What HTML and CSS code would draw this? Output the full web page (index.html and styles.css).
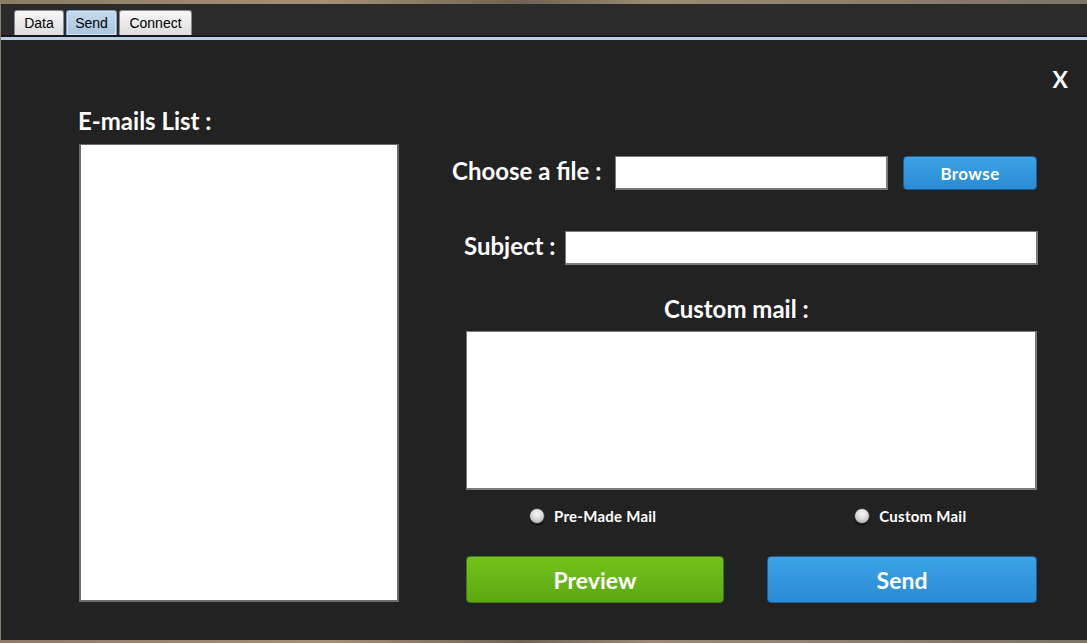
FILE: index.html
```html
<!DOCTYPE html>
<html>
<head>
<meta charset="utf-8">
<link rel="stylesheet" href="styles.css">
</head>
<body>
<div class="app">
  <div class="tabbar">
    <div class="tab">Data</div>
    <div class="tab active">Send</div>
    <div class="tab">Connect</div>
  </div>
  <div class="rule"></div>
  <div class="content">
    <div class="closerow"><span class="close">X</span></div>
    <div class="main">
      <div class="left">
        <div class="heading">E-mails List :</div>
        <div class="listbox"></div>
      </div>
      <div class="right">
        <div class="row file-row">
          <div class="label">Choose a file :</div>
          <div class="field file-field"></div>
          <div class="btn browse">Browse</div>
        </div>
        <div class="row subject-row">
          <div class="label">Subject :</div>
          <div class="field subject-field"></div>
        </div>
        <div class="label custom-label">Custom mail :</div>
        <div class="textarea"></div>
        <div class="radios">
          <div class="radio"><span class="dot"></span><span>Pre-Made Mail</span></div>
          <div class="radio second"><span class="dot"></span><span>Custom Mail</span></div>
        </div>
        <div class="buttons">
          <div class="btn big preview">Preview</div>
          <div class="btn big send">Send</div>
        </div>
      </div>
    </div>
  </div>
</div>
</body>
</html>
```
FILE: styles.css
```css
html, body {
  margin: 0;
  padding: 0;
}
body {
  width: 1087px;
  height: 643px;
  overflow: hidden;
  background: linear-gradient(90deg, #8b7b68 0%, #a39078 30%, #6f6454 48%, #9a8a76 60%, #7d7466 100%);
  font-family: "Liberation Sans", Arial, sans-serif;
}
.app {
  margin: 4px 0 0 1px;
  width: 1086px;
  height: 636px;
  background: #222222;
  display: flex;
  flex-direction: column;
}
.tabbar {
  height: 31px;
  background: #2b2b2b;
  display: flex;
  align-items: flex-end;
  padding-left: 13px;
  gap: 2px;
  box-sizing: border-box;
}
.tab {
  height: 25px;
  box-sizing: border-box;
  padding: 0;
  text-align: center;
  font-size: 14px;
  line-height: 24px;
  color: #000;
  background: linear-gradient(#f7f7f7, #dedede);
  border: 1px solid #8c8c8c;
  border-bottom: none;
  border-radius: 3px 3px 0 0;
}
.tab:first-child { width: 50px; }
.tab.active {
  width: 51px;
  background: linear-gradient(#c6d9ee, #a9c4e0);
  border-color: #7d9fc4;
  box-shadow: inset 0 0 0 1px #d7e5f3;
}
.tab:last-child { width: 73px; }
.rule {
  height: 5px;
  background: linear-gradient(#16161c 0, #16161c 2px, #b8cfe6 2px, #b8cfe6 5px);
}
.content {
  flex: 1;
  background: #222222;
  font-family: "Lato", "Open Sans", sans-serif;
  font-weight: 700;
  color: #ffffff;
}
.closerow {
  display: flex;
  justify-content: flex-end;
  padding: 26px 19px 0 0;
  height: 42px;
  box-sizing: border-box;
}
.close {
  font-size: 23px;
  line-height: 26px;
}
.main {
  display: flex;
  padding-left: 76px;
}
.left {
  width: 322px;
  display: flex;
  flex-direction: column;
}
.heading {
  font-size: 24px;
  line-height: 26px;
  margin-top: 26px;
  padding-left: 1px;
}
.listbox {
  margin-top: 10px;
  margin-left: 2px;
  width: 320px;
  height: 458px;
  box-sizing: border-box;
  background: #fff;
  border: 2px solid #6c6c70;
  border-top-width: 1px;
}
.right {
  margin-left: 53px;
  width: 586px;
  display: flex;
  flex-direction: column;
  padding-top: 74px;
}
.row {
  display: flex;
  align-items: center;
  height: 34px;
}
.label {
  font-size: 24px;
  line-height: 26px;
  white-space: nowrap;
}
.row .label {
  padding-bottom: 4px;
}
.field {
  height: 34px;
  box-sizing: border-box;
  background: #fff;
  border: 2px solid #7a7a7a;
  border-top-width: 1px;
  border-left-width: 1px;
}
.file-row .label { width: 163px; }
.file-field { width: 273px; }
.browse {
  margin-left: 15px;
  width: 134px;
  height: 34px;
  font-size: 17px;
  letter-spacing: 0.4px;
}
.subject-row {
  margin-top: 41px;
  padding-left: 12px;
}
.subject-row .label { width: 101px; }
.subject-field { width: 473px; }
.custom-label {
  margin-top: 31px;
  margin-bottom: 1px;
  padding-left: 212px;
}
.textarea {
  margin-top: 8px;
  margin-left: 14px;
  width: 571px;
  height: 159px;
  box-sizing: border-box;
  background: #fff;
  border: 2px solid #7a7a7a;
  border-top-width: 1px;
  border-left-width: 1px;
}
.radios {
  display: flex;
  margin-top: 18px;
  padding-left: 77px;
  height: 16px;
  align-items: center;
  font-size: 15px;
  letter-spacing: 0.25px;
}
.radio {
  display: flex;
  align-items: center;
  gap: 9px;
}
.radio.second { margin-left: 198px; }
.dot {
  width: 16px;
  height: 16px;
  box-sizing: border-box;
  border-radius: 50%;
  border: 1px solid #3c3c3c;
  background: radial-gradient(circle at 50% 35%, #f6f6f6 0, #dcdcdc 45%, #a8a8a8 85%);
  box-shadow: 0 1px 1px #000;
}
.buttons {
  display: flex;
  margin-top: 32px;
  margin-left: 14px;
  gap: 43px;
}
.btn {
  display: flex;
  align-items: center;
  justify-content: center;
  box-sizing: border-box;
  color: #fff;
  border-radius: 4px;
  border: 1px solid #1e5f92;
  background: linear-gradient(#3ba3e6, #2b8bd4);
}
.big {
  height: 47px;
  font-size: 23px;
}
.preview {
  width: 258px;
  border-color: #3f7a13;
  background: linear-gradient(#73c31b, #5ba812);
}
.send {
  width: 270px;
}
```
